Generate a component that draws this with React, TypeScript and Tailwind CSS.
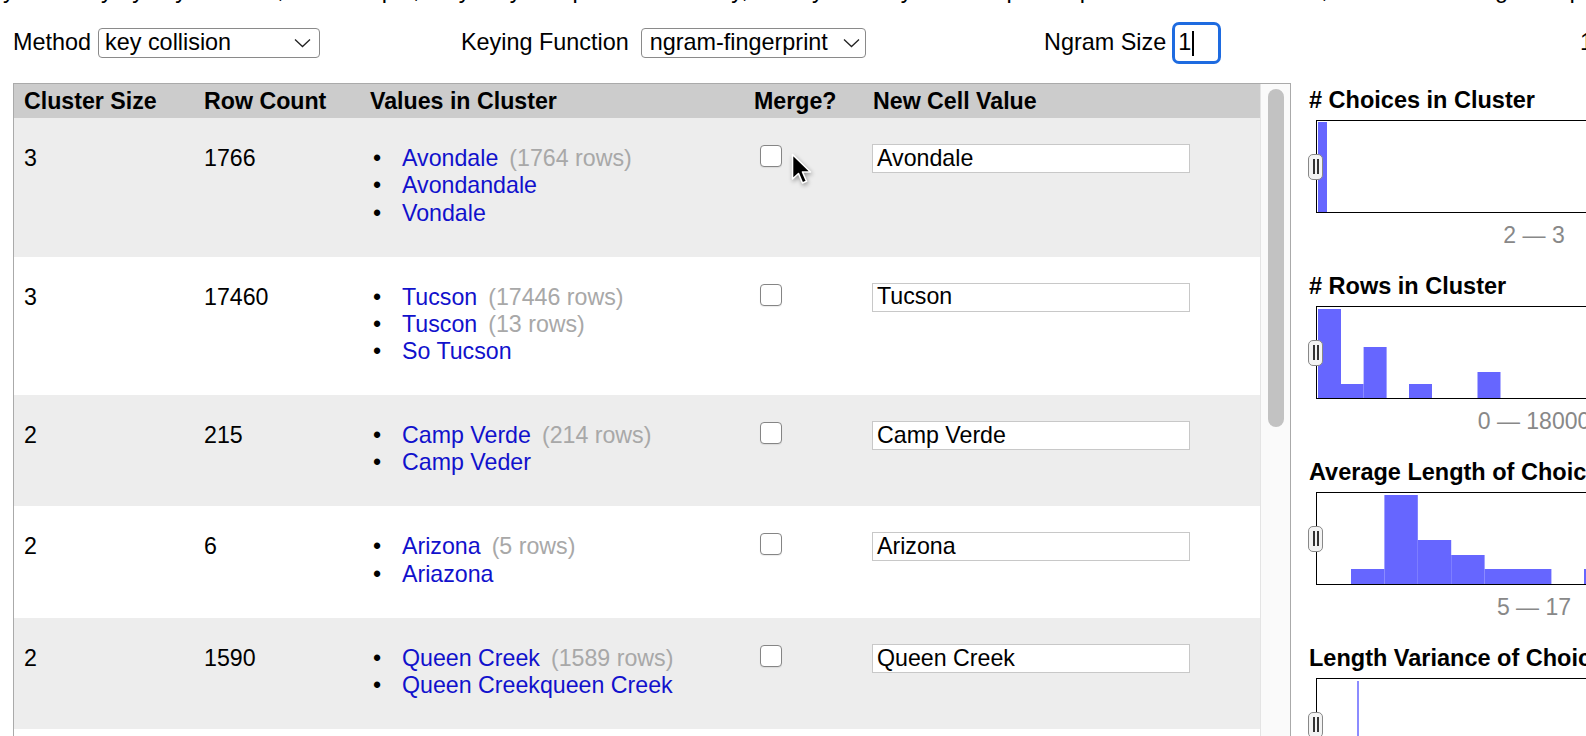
import React from "react";

type Choice = { v: string; n?: number };
type Cluster = { size: number; rows: number; choices: Choice[]; value: string };

const CLUSTERS: Cluster[] = [
  { size: 3, rows: 1766, choices: [{ v: "Avondale", n: 1764 }, { v: "Avondandale" }, { v: "Vondale" }], value: "Avondale" },
  { size: 3, rows: 17460, choices: [{ v: "Tucson", n: 17446 }, { v: "Tuscon", n: 13 }, { v: "So Tucson" }], value: "Tucson" },
  { size: 2, rows: 215, choices: [{ v: "Camp Verde", n: 214 }, { v: "Camp Veder" }], value: "Camp Verde" },
  { size: 2, rows: 6, choices: [{ v: "Arizona", n: 5 }, { v: "Ariazona" }], value: "Arizona" },
  { size: 2, rows: 1590, choices: [{ v: "Queen Creek", n: 1589 }, { v: "Queen Creekqueen Creek" }], value: "Queen Creek" },
  { size: 2, rows: 4, choices: [{ v: "Gold Canyon", n: 3 }, { v: "Gold Canyn" }], value: "Gold Canyon" },
];

type Bar = { x: number; w: number; h: number };

const HISTOGRAMS: { title: string; label: string; bars: Bar[]; thin?: boolean }[] = [
  { title: "# Choices in Cluster", label: "2 — 3", bars: [{ x: 1, w: 9, h: 90 }] },
  {
    title: "# Rows in Cluster",
    label: "0 — 18000",
    bars: [
      { x: 1, w: 23, h: 89 },
      { x: 24, w: 22.6, h: 14 },
      { x: 46.6, w: 23, h: 51 },
      { x: 92, w: 23, h: 14 },
      { x: 160.5, w: 23, h: 26 },
    ],
  },
  {
    title: "Average Length of Choices",
    label: "5 — 17",
    bars: [
      { x: 34, w: 33.4, h: 15 },
      { x: 67.4, w: 33.4, h: 89 },
      { x: 100.8, w: 33.4, h: 44 },
      { x: 134.2, w: 33.4, h: 29 },
      { x: 167.6, w: 66.8, h: 15 },
      { x: 267, w: 33.4, h: 15 },
    ],
  },
  { title: "Length Variance of Choices", label: "0 — 4", bars: [{ x: 40, w: 2, h: 89 }], thin: true },
];

function Chevron() {
  return (
    <svg width="17" height="10" viewBox="0 0 17 10" className="shrink-0">
      <polyline points="1,1.5 8.5,8.5 16,1.5" fill="none" stroke="#222" strokeWidth="1.3" />
    </svg>
  );
}

function Handle() {
  return (
    <div className="absolute left-[-9px] top-1/2 flex h-[26px] w-[15px] -translate-y-1/2 items-center justify-center gap-[2px] rounded-[5px] border border-[#888] bg-[#f3f3f3]">
      <span className="h-[15px] w-[2px] bg-[#333]" />
      <span className="h-[15px] w-[2px] bg-[#333]" />
    </div>
  );
}

function Histogram({ title, label, bars, thin }: { title: string; label: string; bars: Bar[]; thin?: boolean }) {
  return (
    <div className="mb-[25px]">
      <h3 className="whitespace-nowrap text-[23.5px] font-bold leading-[26px]">{title}</h3>
      <div className="relative ml-[7px] mt-[7px] h-[93px] w-[436px] border border-black bg-white">
        <svg width="434" height="91" className="block">
          {bars.map((b, i) => (
            <rect key={i} x={b.x} y={91 - b.h} width={b.w} height={b.h} fill={thin ? "#8c8cff" : "#6666ff"} />
          ))}
        </svg>
        <Handle />
      </div>
      <div className="ml-[7px] mt-[9px] w-[436px] whitespace-nowrap text-center text-[23px] leading-[26px] text-[#888]">{label}</div>
    </div>
  );
}

export default function App() {
  return (
    <div className="relative h-[736px] w-[1586px] overflow-hidden bg-white font-['Liberation_Sans',Arial,sans-serif] text-black">
      {/* Intro paragraph scrolled off the top, only descenders show */}
      <div className="h-[4px] overflow-hidden">
        <p className="-mt-[21px] whitespace-nowrap pl-[3px] text-[23.5px] leading-[22px]">
          y similarity by key collision, for example, they may be spelled differently, but if you really want a specific precision on the results, use nearest neighbor quickly to find examples of key purity.
        </p>
      </div>

      {/* Controls */}
      <div className="mt-[18px] flex h-[42px] items-center pl-[13px] text-[23.4px]">
        <div className="flex w-[448px] shrink-0 items-center">
          <span>Method</span>
          <div className="ml-[7px] flex h-[30px] w-[222px] items-center justify-between rounded-[4px] border border-[#8a8a8a] pl-[6px] pr-[8px]">
            <span>key collision</span>
            <Chevron />
          </div>
        </div>
        <div className="flex w-[583px] shrink-0 items-center">
          <span>Keying Function</span>
          <div className="ml-[12px] flex h-[30px] w-[225px] items-center justify-between rounded-[4px] border border-[#8a8a8a] pl-[8px] pr-[5px]">
            <span className="whitespace-nowrap">ngram-fingerprint</span>
            <Chevron />
          </div>
        </div>
        <div className="flex w-[536px] shrink-0 items-center">
          <span className="whitespace-nowrap">Ngram Size</span>
          <div className="ml-[6px] flex h-[42px] w-[49px] items-center rounded-[7px] border-[3px] border-[#1e6be0] pl-[3px]">
            <span>1</span>
            <span className="ml-[1px] h-[25px] w-[1.5px] bg-black" />
          </div>
        </div>
        <span className="shrink-0 whitespace-nowrap">13 clusters found</span>
      </div>

      {/* Main */}
      <div className="mt-[19px] flex pl-[13px]">
        <div className="flex h-[700px] w-[1278px] shrink-0 border border-[#aaa]">
          <div className="w-[1246px] text-[23.2px]">
            <div className="grid h-[34px] grid-cols-[180px_166px_384px_119px_1fr] items-center bg-[#cccccc] font-bold">
              <div className="pl-[10px]">Cluster Size</div>
              <div className="pl-[10px]">Row Count</div>
              <div className="pl-[10px]">Values in Cluster</div>
              <div className="pl-[10px]">Merge?</div>
              <div className="pl-[10px]">New Cell Value</div>
            </div>
            {CLUSTERS.map((c, i) => (
              <div
                key={i}
                className={`grid grid-cols-[180px_166px_384px_119px_1fr] items-start pb-[29.7px] pt-[27px] leading-[27.3px] ${
                  i % 2 === 0 ? "bg-[#ededed]" : "bg-white"
                }`}
              >
                <div className="pl-[10px]">{c.size}</div>
                <div className="pl-[10px]">{c.rows}</div>
                <ul className="pl-[10px]">
                  {c.choices.map((ch) => (
                    <li key={ch.v} className="flex whitespace-nowrap">
                      <span className="w-[32px] pl-[3px]">•</span>
                      <span className="text-[#1111cc]">{ch.v}</span>
                      {ch.n !== undefined && <span className="ml-[11px] text-[#a8a8a8]">({ch.n} rows)</span>}
                    </li>
                  ))}
                </ul>
                <div className="pl-[16px]">
                  <div className="h-[22px] w-[22px] rounded-[4px] border border-[#858585] bg-white shadow-[0_1px_1px_rgba(0,0,0,0.08)]" />
                </div>
                <div className="pl-[9px]">
                  <div className="-mt-[1px] flex h-[29px] w-[318px] items-center border border-[#c8c8c8] bg-white pl-[4px]">
                    {c.value}
                  </div>
                </div>
              </div>
            ))}
          </div>
          <div className="w-[30px] border-l border-[#e4e4e4] bg-[#fafafa] pl-[7px] pt-[5px]">
            <div className="h-[338px] w-[16px] rounded-full bg-[#c2c2c2]" />
          </div>
        </div>

        <div className="ml-[18px] w-[460px] shrink-0 pt-[4px]">
          {HISTOGRAMS.map((h) => (
            <Histogram key={h.title} {...h} />
          ))}
        </div>
      </div>

      {/* Mouse pointer over the first checkbox */}
      <svg
        className="absolute left-[791px] top-[153px] drop-shadow-[1px_2px_2px_rgba(0,0,0,0.35)]"
        width="24"
        height="36"
        viewBox="0 0 24 36"
      >
        <path d="M1.5 1.5 L1.5 26 L7.5 20.5 L11.5 30 L15.5 28.3 L11.5 19 L19.5 19 Z" fill="#000" stroke="#fff" strokeWidth="1.6" strokeLinejoin="round" />
      </svg>
    </div>
  );
}
